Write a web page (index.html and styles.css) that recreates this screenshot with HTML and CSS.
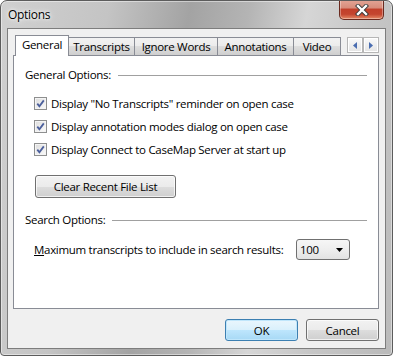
FILE: index.html
```html
<!DOCTYPE html>
<html lang="en">
<head>
    <meta charset="UTF-8">
    <title>Options</title>
    <link rel="stylesheet" href="styles.css">
</head>
<body>
    <div class="window">
        <div class="titlebar">
            <span class="title">Options</span>
            <div class="close">
                <svg width="14" height="12" viewBox="0 0 14 12">
                    <path d="M3 2 L11 10 M11 2 L3 10" stroke="#3a3a3a" stroke-width="4.2" stroke-linecap="square"/>
                    <path d="M3 2 L11 10 M11 2 L3 10" stroke="#ffffff" stroke-width="2.4" stroke-linecap="square"/>
                </svg>
            </div>
        </div>

        <div class="client">
            <div class="tabs">
                <div class="tab active">General</div>
                <div class="tab w-transcripts">Transcripts</div>
                <div class="tab w-ignore">Ignore Words</div>
                <div class="tab w-annot">Annotations</div>
                <div class="tab w-video">Video</div>
                <div class="spin">
                    <div class="spin-btn">
                        <svg width="4" height="7" viewBox="0 0 4 7"><path d="M4 0 L0 3.5 L4 7 Z" fill="#4a6db0"/></svg>
                    </div>
                    <div class="spin-btn">
                        <svg width="4" height="7" viewBox="0 0 4 7"><path d="M0 0 L4 3.5 L0 7 Z" fill="#4a6db0"/></svg>
                    </div>
                </div>
            </div>

            <div class="panel">
                <div class="group-title"><span>General Options:</span><i></i></div>

                <ul class="checks">
                    <li><span class="box"><svg width="9" height="9" viewBox="0 0 9 9"><path d="M1.3 4.6 L3.4 7.2 L7.8 1.4" fill="none" stroke="#4b5f9c" stroke-width="1.8"/></svg></span>Display "No Transcripts" reminder on open case</li>
                    <li><span class="box"><svg width="9" height="9" viewBox="0 0 9 9"><path d="M1.3 4.6 L3.4 7.2 L7.8 1.4" fill="none" stroke="#4b5f9c" stroke-width="1.8"/></svg></span>Display annotation modes dialog on open case</li>
                    <li><span class="box"><svg width="9" height="9" viewBox="0 0 9 9"><path d="M1.3 4.6 L3.4 7.2 L7.8 1.4" fill="none" stroke="#4b5f9c" stroke-width="1.8"/></svg></span>Display Connect to CaseMap Server at start up</li>
                </ul>

                <button class="btn btn-clear">Clear Recent File List</button>

                <div class="group-title search"><span>Search Options:</span><i></i></div>

                <div class="max-row">
                    <span class="label"><u>M</u>aximum transcripts to include in search results:</span>
                    <div class="select">
                        <span>100</span>
                        <svg width="7" height="4" viewBox="0 0 7 4"><path d="M0 0 L7 0 L3.5 4 Z" fill="#000"/></svg>
                    </div>
                </div>
            </div>

            <div class="actions">
                <button class="btn btn-default">OK</button>
                <button class="btn">Cancel</button>
            </div>
        </div>
    </div>
</body>
</html>
```

FILE: styles.css
```css
* {
    box-sizing: border-box;
}

body {
    margin: 0;
    background: #ffffff;
    font-family: "Open Sans", "Segoe UI", sans-serif;
    font-size: 11.5px;
    letter-spacing: -0.3px;
    color: #000;
}

.window {
    width: 393px;
    height: 356px;
    border: 1px solid #5c5c5c;
    border-radius: 7px 7px 4px 4px;
    background: linear-gradient(100deg, #d0d0d0 0%, #c4c4c4 24%, #a3a3a3 42%, #b4b4b4 55%, #d6d6d6 68%, #c6c6c6 82%, #bababa 100%);
    box-shadow: inset 0 0 0 1px rgba(255,255,255,0.45);
    display: flex;
    flex-direction: column;
    overflow: hidden;
}

.titlebar {
    height: 27px;
    display: flex;
    align-items: flex-start;
    flex-shrink: 0;
}

.title {
    padding: 6px 0 0 7px;
    font-size: 12px;
    line-height: 16px;
    text-shadow: 0 0 6px #fff, 0 0 3px #fff;
}

.close {
    margin-left: auto;
    margin-right: 8px;
    margin-top: -1px;
    width: 45px;
    height: 20px;
    border: 1px solid #6a2a1f;
    border-top: none;
    border-radius: 0 0 5px 5px;
    background: linear-gradient(#e3a596 0%, #d88d7c 40%, #c2402b 50%, #c4452f 75%, #e58a66 100%);
    box-shadow: inset 0 0 0 1px rgba(255,255,255,0.35);
    display: flex;
    align-items: center;
    justify-content: center;
}

.client {
    flex: 1;
    margin: 0 6px 6px 6px;
    border: 1px solid #7d7d7d;
    background: #f0f0f0;
    display: flex;
    flex-direction: column;
    padding: 6px 6px 7px 5px;
}

/* tab strip */
.tabs {
    height: 20px;
    display: flex;
    align-items: flex-end;
    padding-left: 2px;
    flex-shrink: 0;
}

.tab {
    height: 18px;
    border: 1px solid #898c95;
    border-bottom: none;
    margin-left: -1px;
    background: linear-gradient(#f2f2f2 0%, #ebebeb 50%, #dddddd 50%, #cfcfcf 100%);
    text-align: center;
    line-height: 17px;
}

.tab:first-child {
    margin-left: 0;
}

.tab.active {
    width: 54px;
    height: 21px;
    margin-bottom: -1px;
    background: #fff;
    position: relative;
    z-index: 1;
    line-height: 18px;
}

.w-transcripts { width: 67px; }
.w-ignore { width: 84px; }
.w-annot { width: 77px; }
.w-video { width: 48px; }

.spin {
    margin-left: auto;
    align-self: flex-start;
    margin-top: 2px;
    display: flex;
}

.spin-btn {
    width: 16px;
    height: 16px;
    border: 1px solid #b6b6b6;
    background: linear-gradient(#fafafa, #e4e4e4);
    box-shadow: inset 0 0 0 1px #fff;
    display: flex;
    align-items: center;
    justify-content: center;
}

/* page */
.panel {
    flex: 1;
    background: #fff;
    border: 1px solid #898c95;
    padding: 11px 11px 0 11px;
}

.group-title {
    display: flex;
    align-items: center;
    height: 16px;
    line-height: 16px;
}

.group-title i {
    flex: 1;
    height: 1px;
    background: #a0a0a0;
    margin-left: 7px;
}

.group-title.search {
    margin-top: 14px;
}

.checks {
    list-style: none;
    margin: 9px 0 0 9px;
    padding: 0;
}

.checks li {
    height: 23px;
    display: flex;
    align-items: center;
}

.box {
    width: 13px;
    height: 13px;
    border: 1px solid #8e8f8f;
    background: linear-gradient(135deg, #dcdcdc, #fbfbfb);
    box-shadow: inset 0 0 0 1px #f4f4f4;
    margin-right: 4px;
    display: flex;
    align-items: center;
    justify-content: center;
}

.btn {
    font-family: inherit;
    font-size: 11.5px;
    letter-spacing: -0.3px;
    color: #000;
    height: 22px;
    width: 73px;
    padding: 0;
    border: 1px solid #707070;
    border-radius: 3px;
    background: linear-gradient(#f2f2f2 0%, #ebebeb 50%, #dddddd 50%, #cfcfcf 100%);
    box-shadow: inset 0 0 0 1px rgba(255,255,255,0.7);
}

.btn-clear {
    display: block;
    width: 141px;
    height: 23px;
    margin: 14px 0 0 10px;
}

.btn-default {
    border-color: #3c7fb1;
    background: linear-gradient(#eaf6fd 0%, #d9f0fc 50%, #bee6fd 50%, #a7d9f5 100%);
    box-shadow: inset 0 0 0 1px #c0e6fb;
}

.max-row {
    display: flex;
    align-items: center;
    margin: 11px 0 0 9px;
}

.label {
    width: 262px;
    white-space: nowrap;
}

.select {
    width: 54px;
    height: 21px;
    border: 1px solid #707070;
    border-radius: 3px;
    background: linear-gradient(#f6f6f6 0%, #eeeeee 50%, #e2e2e2 100%);
    display: flex;
    align-items: center;
    justify-content: space-between;
    padding: 0 6px 0 3px;
}

.actions {
    display: flex;
    justify-content: flex-end;
    gap: 8px;
    margin-top: 10px;
    flex-shrink: 0;
}
```
